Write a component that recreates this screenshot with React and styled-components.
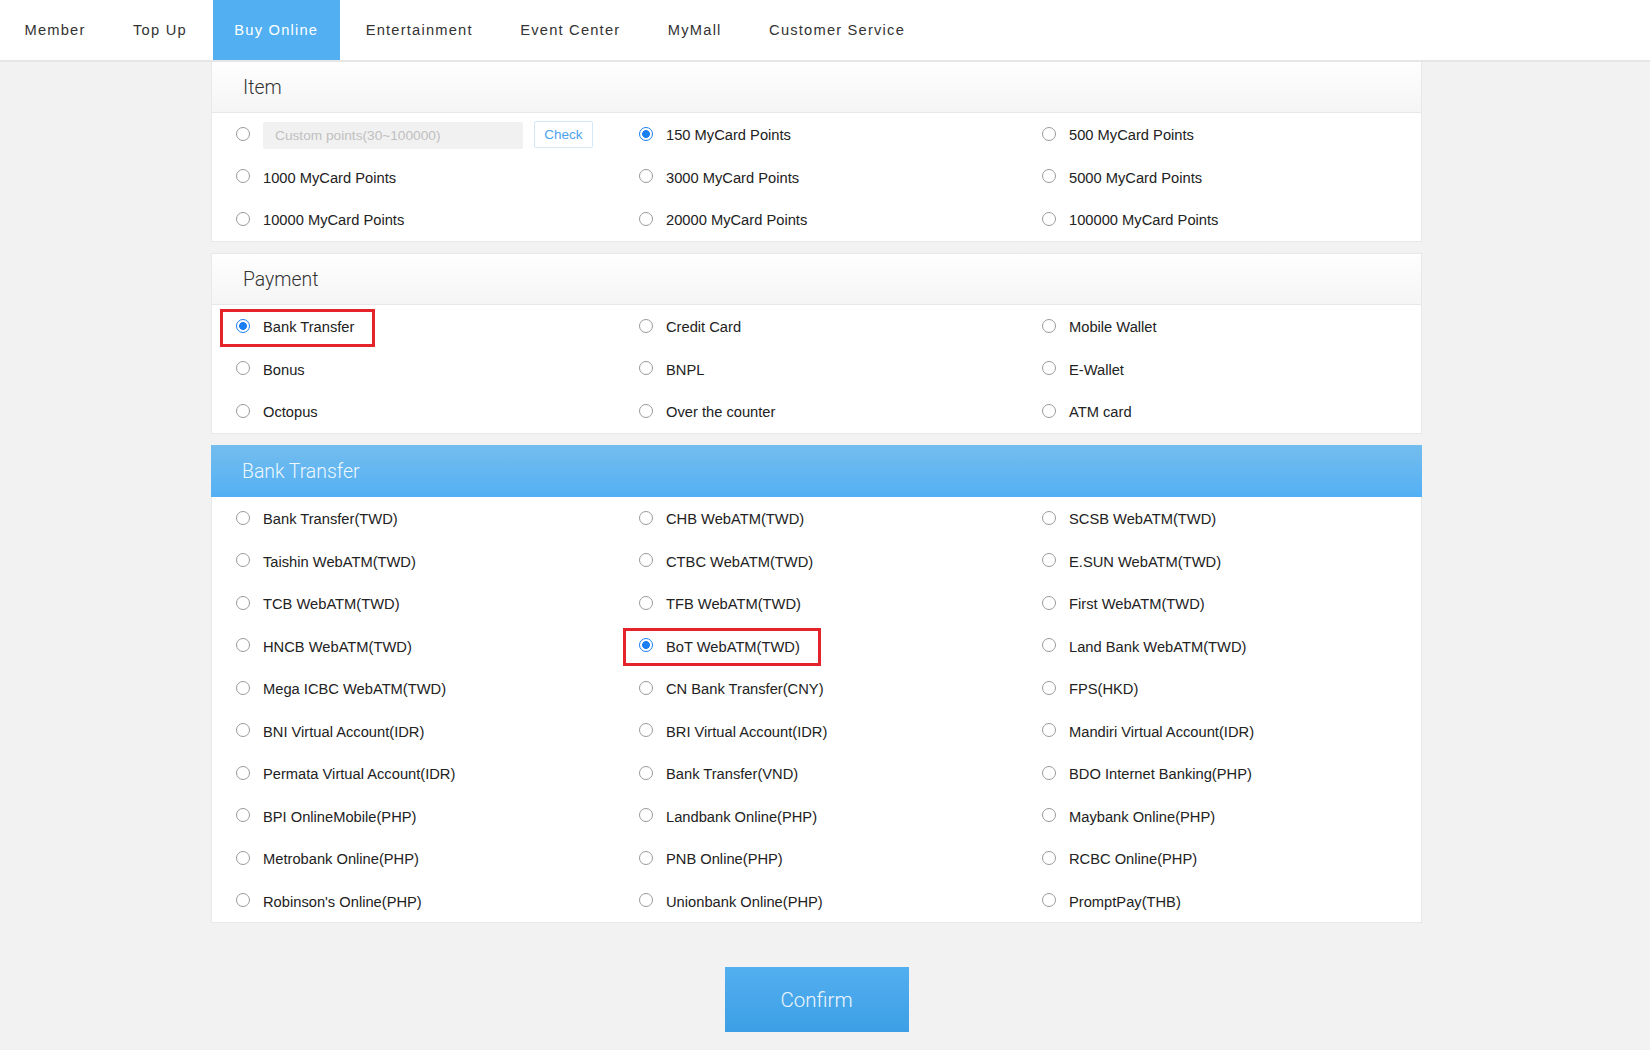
import React from "react";
import styled, { createGlobalStyle } from "styled-components";

const GlobalStyle = createGlobalStyle`
  html, body {
    margin: 0;
    padding: 0;
    background: #f2f2f2;
    font-family: "Liberation Sans", Arial, sans-serif;
  }
  * {
    box-sizing: border-box;
  }
`;

const NavBar = styled.div`
  background: #fff;
  height: 62px;
  border-bottom: 2px solid #e6e6e6;
  display: flex;
  padding-left: 3px;
  gap: 4.5px;
`;

const NavItem = styled.a`
  height: 60px;
  line-height: 60px;
  padding: 0 21.5px;
  font-size: 14.7px;
  letter-spacing: 1.2px;
  color: ${(p) => (p.active ? "#fff" : "#333")};
  background: ${(p) => (p.active ? "#51aff2" : "transparent")};
  cursor: pointer;
`;

const Main = styled.div`
  padding-right: 17px;
  padding-bottom: 20px;
`;

const Content = styled.div`
  width: 1211px;
  margin: 0 auto;
  display: flex;
  flex-direction: column;
  gap: 11.5px;
`;

const Panel = styled.div`
  background: #fff;
  border: 1px solid #e8e8e8;
  border-top: ${(p) => (p.flush ? "none" : "1px solid #e8e8e8")};
`;

const PanelHeader = styled.div`
  height: ${(p) => (p.blue ? "52px" : "51px")};
  display: flex;
  align-items: center;
  padding-left: 31px;
  font-family: Roboto, "Liberation Sans", sans-serif;
  font-weight: 300;
  font-size: 19.4px;
  color: ${(p) => (p.blue ? "rgba(255,255,255,0.92)" : "#333")};
  background: ${(p) =>
    p.blue
      ? "linear-gradient(to bottom, #74bdee, #53b0f4)"
      : "linear-gradient(to bottom, #fefefe, #f5f5f5)"};
  border-bottom: ${(p) => (p.blue ? "none" : "1px solid #e8e8e8")};
  margin: ${(p) => (p.blue ? "-1px -1px 0" : "0")};
`;

const Grid = styled.div`
  display: grid;
  grid-template-columns: repeat(3, 1fr);
`;

const Cell = styled.div`
  height: 42.5px;
  display: flex;
  align-items: center;
  padding-left: 24px;
  padding-top: 2px;
`;

const Option = styled.label`
  position: relative;
  display: inline-flex;
  align-items: center;
  gap: 13px;
  font-size: 14.7px;
  color: #222;
  cursor: pointer;

  &::after {
    content: "";
    display: ${(p) => (p.highlight ? "block" : "none")};
    position: absolute;
    left: -16px;
    right: -21px;
    top: -10px;
    bottom: -11px;
    border: 3px solid #e5232a;
    pointer-events: none;
  }
`;

const Radio = styled.input.attrs({ type: "radio" })`
  appearance: none;
  margin: 0 0 3px;
  width: 14px;
  height: 14px;
  border-radius: 50%;
  border: 1px solid #9a9a9a;
  background: #fff;
  flex-shrink: 0;

  &:checked {
    border-color: #1b7ef2;
    background: radial-gradient(circle, #1b7ef2 0 3.6px, #fff 4.2px);
  }
`;

const CustomInput = styled.input`
  width: 260px;
  height: 27px;
  border: none;
  border-radius: 2px;
  background: #f1f1f1;
  padding: 0 12px;
  font-family: "Liberation Sans", Arial, sans-serif;
  font-size: 13.7px;
  color: #333;
  outline: none;

  &::placeholder {
    color: #c0c0c0;
  }
`;

const CheckButton = styled.button`
  width: 59px;
  height: 27px;
  margin-left: 11px;
  margin-bottom: 2px;
  background: #fff;
  border: 1px solid #d5e8f8;
  border-radius: 2px;
  color: #4ba3ee;
  font-family: "Liberation Sans", Arial, sans-serif;
  font-size: 13.5px;
  cursor: pointer;
`;

const ConfirmWrap = styled.div`
  display: flex;
  justify-content: center;
  margin-top: 44px;
`;

const ConfirmButton = styled.button`
  width: 184px;
  height: 65px;
  border: none;
  background: linear-gradient(to bottom, #53aff0, #3c9fe5);
  color: #eef6fd;
  font-family: Roboto, "Liberation Sans", sans-serif;
  font-weight: 300;
  font-size: 20.5px;
  cursor: pointer;
`;

const navItems = [
  "Member",
  "Top Up",
  "Buy Online",
  "Entertainment",
  "Event Center",
  "MyMall",
  "Customer Service",
];

const itemOptions = [
  "custom",
  "150 MyCard Points",
  "500 MyCard Points",
  "1000 MyCard Points",
  "3000 MyCard Points",
  "5000 MyCard Points",
  "10000 MyCard Points",
  "20000 MyCard Points",
  "100000 MyCard Points",
];

const paymentOptions = [
  "Bank Transfer",
  "Credit Card",
  "Mobile Wallet",
  "Bonus",
  "BNPL",
  "E-Wallet",
  "Octopus",
  "Over the counter",
  "ATM card",
];

const bankOptions = [
  "Bank Transfer(TWD)",
  "CHB WebATM(TWD)",
  "SCSB WebATM(TWD)",
  "Taishin WebATM(TWD)",
  "CTBC WebATM(TWD)",
  "E.SUN WebATM(TWD)",
  "TCB WebATM(TWD)",
  "TFB WebATM(TWD)",
  "First WebATM(TWD)",
  "HNCB WebATM(TWD)",
  "BoT WebATM(TWD)",
  "Land Bank WebATM(TWD)",
  "Mega ICBC WebATM(TWD)",
  "CN Bank Transfer(CNY)",
  "FPS(HKD)",
  "BNI Virtual Account(IDR)",
  "BRI Virtual Account(IDR)",
  "Mandiri Virtual Account(IDR)",
  "Permata Virtual Account(IDR)",
  "Bank Transfer(VND)",
  "BDO Internet Banking(PHP)",
  "BPI OnlineMobile(PHP)",
  "Landbank Online(PHP)",
  "Maybank Online(PHP)",
  "Metrobank Online(PHP)",
  "PNB Online(PHP)",
  "RCBC Online(PHP)",
  "Robinson's Online(PHP)",
  "Unionbank Online(PHP)",
  "PromptPay(THB)",
];

const OptionGroup = ({ name, options, checked, highlight }) => (
  <Grid>
    {options.map((opt) => (
      <Cell key={opt}>
        {opt === "custom" ? (
          <>
            <Option>
              <Radio name={name} />
              <CustomInput placeholder="Custom points(30~100000)" disabled />
            </Option>
            <CheckButton>Check</CheckButton>
          </>
        ) : (
          <Option highlight={highlight === opt}>
            <Radio name={name} defaultChecked={checked === opt} />
            {opt}
          </Option>
        )}
      </Cell>
    ))}
  </Grid>
);

const App = () => {
  return (
    <>
      <GlobalStyle />
      <NavBar>
        {navItems.map((n) => (
          <NavItem key={n} active={n === "Buy Online"}>
            {n}
          </NavItem>
        ))}
      </NavBar>
      <Main>
        <Content>
          <Panel flush>
            <PanelHeader>Item</PanelHeader>
            <OptionGroup
              name="item"
              options={itemOptions}
              checked="150 MyCard Points"
            />
          </Panel>
          <Panel>
            <PanelHeader>Payment</PanelHeader>
            <OptionGroup
              name="payment"
              options={paymentOptions}
              checked="Bank Transfer"
              highlight="Bank Transfer"
            />
          </Panel>
          <Panel>
            <PanelHeader blue>Bank Transfer</PanelHeader>
            <OptionGroup
              name="bank"
              options={bankOptions}
              checked="BoT WebATM(TWD)"
              highlight="BoT WebATM(TWD)"
            />
          </Panel>
        </Content>
        <ConfirmWrap>
          <ConfirmButton>Confirm</ConfirmButton>
        </ConfirmWrap>
      </Main>
    </>
  );
};

export default App;
